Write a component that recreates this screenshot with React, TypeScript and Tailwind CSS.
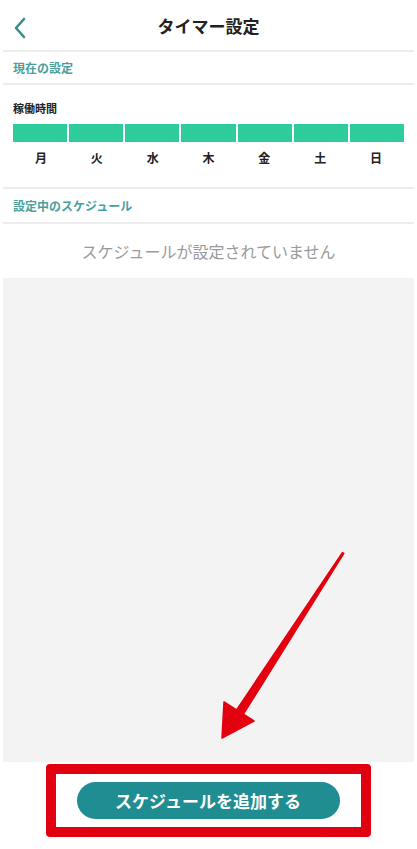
const days = ["月", "火", "水", "木", "金", "土", "日"];

function Divider({ className = "" }: { className?: string }) {
  return <div className={`mx-[3px] h-[2px] bg-[#ececec] ${className}`} />;
}

export default function App() {
  return (
    <div
      className="relative flex h-[849px] w-[417px] flex-col overflow-hidden bg-white"
      style={{ fontFamily: '"Noto Sans CJK JP", "Noto Sans", sans-serif' }}
    >
      {/* header */}
      <div className="relative flex h-[50px] items-center justify-center pt-[2px]">
        <svg
          className="absolute left-[12px] top-[16px]"
          width="18"
          height="24"
          viewBox="0 0 18 24"
          fill="none"
          stroke="#3b8d88"
          strokeWidth="2.6"
          strokeLinecap="round"
          strokeLinejoin="round"
        >
          <path d="M12 3 L4 12 L12 21" />
        </svg>
        <span className="text-[17px] font-bold text-[#222]">タイマー設定</span>
      </div>
      <Divider />

      <div className="flex h-[31px] items-center px-[13px] text-[12px] font-bold text-[#4a9f9c]">
        現在の設定
      </div>
      <Divider />

      <div className="px-[13px] pt-[15px]">
        <div className="text-[11px] font-bold leading-[16px] text-[#222]">稼働時間</div>
        <div className="mt-[8px] grid grid-cols-7 gap-[2px]">
          {days.map((d) => (
            <div key={d} className="h-[18px] bg-[#2ecb9c]" />
          ))}
        </div>
        <div className="mt-[7px] grid grid-cols-7">
          {days.map((d) => (
            <div key={d} className="text-center text-[12px] font-bold leading-[18px] text-[#222]">
              {d}
            </div>
          ))}
        </div>
      </div>

      <div className="mt-[20px]">
        <Divider />
      </div>
      <div className="flex h-[33px] items-center px-[13px] text-[12px] font-bold text-[#4a9f9c]">
        設定中のスケジュール
      </div>
      <Divider />

      <div className="flex h-[54px] items-center justify-center text-[16px] text-[#9a9a9a]">
        スケジュールが設定されていません
      </div>

      <div className="mx-[3px] flex-1 bg-[#f3f3f3]" />

      <div className="flex h-[87px] items-start justify-center pt-[2px]">
        <div className="mr-[1px] rounded-[4px] border-[10px] border-[#e0000f] px-[21px] py-[8px]">
          <button className="flex h-[37px] w-[263px] items-center justify-center rounded-full bg-[#1f8d91] text-[17px] font-bold text-white">
            スケジュールを追加する
          </button>
        </div>
      </div>

      {/* annotation arrow */}
      <svg className="pointer-events-none absolute left-0 top-0" width="417" height="849">
        <polygon
          points="342.4,552.6 236.6,709.8 224,702 222,738 254,721 243.4,714.2 343.8,553.4"
          fill="#e3000f"
          stroke="#e3000f"
          strokeWidth="1.5"
          strokeLinejoin="round"
        />
      </svg>
    </div>
  );
}
